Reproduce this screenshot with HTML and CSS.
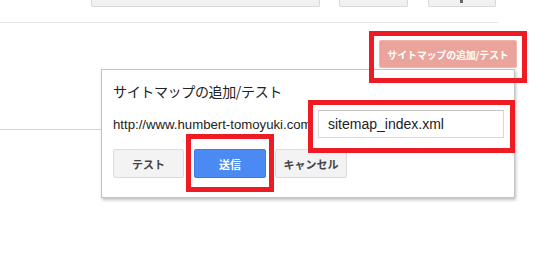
FILE: index.html
```html
<!DOCTYPE html>
<html lang="ja">
<head>
<meta charset="utf-8">
<link rel="stylesheet" href="styles.css">
</head>
<body>
<div class="topbar">
  <div class="tb-btn tb-wide"></div>
  <div class="tb-btn tb-mid"></div>
  <div class="tb-btn tb-last"><span class="tb-glyph"></span></div>
</div>
<div class="rule"></div>
<div class="toolbar">
  <button class="btn-add">サイトマップの追加/テスト</button>
</div>
<div class="content-line"></div>

<div class="dialog">
  <div class="dlg-title">サイトマップの追加/テスト</div>
  <div class="dlg-row">
    <span class="dlg-url">http://www.humbert-tomoyuki.com</span>
    <div class="dlg-input">sitemap_index.xml</div>
  </div>
  <div class="dlg-actions">
    <button class="btn btn-gray btn-test">テスト</button>
    <button class="btn btn-blue">送信</button>
    <button class="btn btn-gray btn-cancel">キャンセル</button>
  </div>
</div>

<div class="mark mark-1"></div>
<div class="mark mark-2"></div>
<div class="mark mark-3"></div>
</body>
</html>
```
FILE: styles.css
```css
html, body {
  margin: 0;
  padding: 0;
  background: #fff;
  font-family: "Liberation Sans", Arial, "Noto Sans CJK JP", sans-serif;
}

.topbar {
  display: flex;
  padding-left: 91px;
  height: 7px;
}
.tb-btn {
  height: 6px;
  background: #f1f1f1;
  border: 1px solid #d8d8d8;
  border-top: none;
  border-radius: 0 0 2px 2px;
  position: relative;
}
.tb-wide { width: 227px; }
.tb-mid { width: 67px; margin-left: 19px; }
.tb-last { width: 66px; margin-left: 20px; }
.tb-glyph {
  position: absolute;
  left: 31px;
  top: 0;
  width: 3px;
  height: 3px;
  background: #666;
}

.rule {
  margin-top: 15px;
  width: 498px;
  height: 1px;
  background: #e5e5e5;
}

.toolbar {
  width: 517px;
  display: flex;
  justify-content: flex-end;
  margin-top: 17px;
}
.btn-add {
  width: 138px;
  height: 28px;
  margin: 0;
  padding: 0;
  background: #eaa49c;
  border: 1px solid #f0b4ad;
  border-radius: 2px;
  color: #fff;
  font-family: "Noto Sans CJK JP", sans-serif;
  font-weight: bold;
  font-size: 10px;
  letter-spacing: -0.2px;
}

.content-line {
  margin-top: 61px;
  width: 200px;
  height: 1px;
  background: #d4d4d4;
}

.dialog {
  position: absolute;
  left: 101px;
  top: 69px;
  width: 412px;
  height: 127px;
  background: #fff;
  border: 1px solid #c4c4c4;
  box-shadow: 1px 2px 3px rgba(0, 0, 0, 0.25);
  box-sizing: content-box;
  padding: 0;
}
.dlg-title {
  margin: 12px 0 0 11px;
  height: 18px;
  font-family: "Noto Sans CJK JP", sans-serif;
  font-size: 14px;
  line-height: 18px;
  color: #222;
  letter-spacing: -0.35px;
}
.dlg-row {
  display: flex;
  align-items: center;
  margin: 10px 0 0 11px;
  height: 28px;
}
.dlg-url {
  font-size: 13.2px;
  color: #222;
  width: 205px;
  white-space: nowrap;
}
.dlg-input {
  width: 175px;
  height: 26px;
  border: 1px solid #d9d9d9;
  border-top-color: #c4c4c4;
  padding-left: 9px;
  font-size: 14px;
  line-height: 26px;
  color: #222;
}
.dlg-actions {
  display: flex;
  margin: 11px 0 0 11px;
}
.btn {
  height: 29px;
  margin: 0 9px 0 0;
  padding: 0;
  border-radius: 2px;
  font-family: "Noto Sans CJK JP", sans-serif;
  font-weight: bold;
  font-size: 11px;
}
.btn-gray {
  background: #f3f3f3;
  border: 1px solid #dcdcdc;
  color: #444;
}
.btn-test { width: 71px; margin-right: 10px; }
.btn-cancel { width: 72px; }
.btn-blue {
  width: 72px;
  background: #4a8af2;
  border: 1px solid #3a7be6;
  color: #fff;
}

.mark {
  position: absolute;
  border: 5px solid #ed1c24;
  box-sizing: border-box;
  z-index: 5;
}
.mark-1 { left: 369px; top: 31px; width: 158px; height: 52px; }
.mark-2 { left: 308px; top: 100px; width: 207px; height: 53px; }
.mark-3 { left: 186px; top: 134px; width: 88px; height: 58px; }
```
